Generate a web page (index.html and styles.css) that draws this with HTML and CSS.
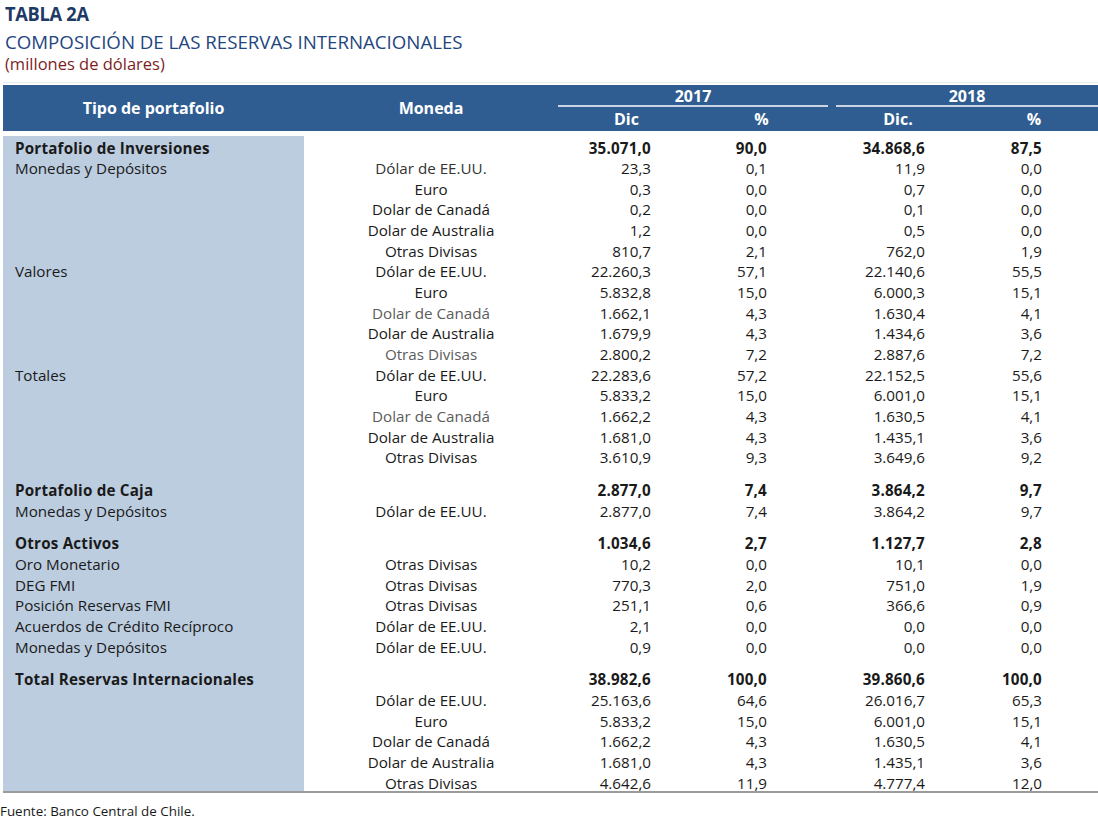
FILE: index.html
```html
<!DOCTYPE html>
<html lang="es">
<head>
<meta charset="utf-8">
<title>Tabla 2A</title>
<link rel="stylesheet" href="styles.css">
</head>
<body>
<div class="page">
  <header class="titles">
    <h1 class="t-num"><span class="t-num-in">TABLA 2A</span></h1>
    <h2 class="t-main">COMPOSICIÓN DE LAS RESERVAS INTERNACIONALES</h2>
    <p class="t-unit">(millones de dólares)</p>
  </header>
  <div class="rule-top"></div>
  <table class="data">
    <colgroup>
      <col class="c-tipo"><col class="c-mon"><col class="c-d17"><col class="c-p17"><col class="c-sp"><col class="c-d18"><col class="c-p18">
    </colgroup>
    <thead>
      <tr class="h1">
        <th rowspan="2" class="h-tipo">Tipo de portafolio</th>
        <th rowspan="2" class="h-mon">Moneda</th>
        <th colspan="2" class="h-year">2017</th>
        <th rowspan="2" class="h-sp"></th>
        <th colspan="2" class="h-year">2018</th>
      </tr>
      <tr class="h2">
        <th class="h-sub">Dic</th>
        <th class="h-sub">%</th>
        <th class="h-sub h-dic18">Dic.</th>
        <th class="h-sub">%</th>
      </tr>
    </thead>
    <tbody>
      <tr class="gap"><td class="tipo"></td><td colspan="6"></td></tr>
      <tr class="b"><td class="tipo">Portafolio de Inversiones</td><td class="mon"></td><td class="n d17">35.071,0</td><td class="n p17">90,0</td><td></td><td class="n d18">34.868,6</td><td class="n p18">87,5</td></tr>
      <tr><td class="tipo">Monedas y Depósitos</td><td class="mon soft">Dólar de EE.UU.</td><td class="n d17">23,3</td><td class="n p17">0,1</td><td></td><td class="n d18">11,9</td><td class="n p18">0,0</td></tr>
      <tr><td class="tipo"></td><td class="mon">Euro</td><td class="n d17">0,3</td><td class="n p17">0,0</td><td></td><td class="n d18">0,7</td><td class="n p18">0,0</td></tr>
      <tr><td class="tipo"></td><td class="mon">Dolar de Canadá</td><td class="n d17">0,2</td><td class="n p17">0,0</td><td></td><td class="n d18">0,1</td><td class="n p18">0,0</td></tr>
      <tr><td class="tipo"></td><td class="mon">Dolar de Australia</td><td class="n d17">1,2</td><td class="n p17">0,0</td><td></td><td class="n d18">0,5</td><td class="n p18">0,0</td></tr>
      <tr><td class="tipo"></td><td class="mon">Otras Divisas</td><td class="n d17">810,7</td><td class="n p17">2,1</td><td></td><td class="n d18">762,0</td><td class="n p18">1,9</td></tr>
      <tr><td class="tipo">Valores</td><td class="mon">Dólar de EE.UU.</td><td class="n d17">22.260,3</td><td class="n p17">57,1</td><td></td><td class="n d18">22.140,6</td><td class="n p18">55,5</td></tr>
      <tr><td class="tipo"></td><td class="mon">Euro</td><td class="n d17">5.832,8</td><td class="n p17">15,0</td><td></td><td class="n d18">6.000,3</td><td class="n p18">15,1</td></tr>
      <tr><td class="tipo"></td><td class="mon muted">Dolar de Canadá</td><td class="n d17">1.662,1</td><td class="n p17">4,3</td><td></td><td class="n d18">1.630,4</td><td class="n p18">4,1</td></tr>
      <tr><td class="tipo"></td><td class="mon">Dolar de Australia</td><td class="n d17">1.679,9</td><td class="n p17">4,3</td><td></td><td class="n d18">1.434,6</td><td class="n p18">3,6</td></tr>
      <tr><td class="tipo"></td><td class="mon muted">Otras Divisas</td><td class="n d17">2.800,2</td><td class="n p17">7,2</td><td></td><td class="n d18">2.887,6</td><td class="n p18">7,2</td></tr>
      <tr><td class="tipo">Totales</td><td class="mon">Dólar de EE.UU.</td><td class="n d17">22.283,6</td><td class="n p17">57,2</td><td></td><td class="n d18">22.152,5</td><td class="n p18">55,6</td></tr>
      <tr><td class="tipo"></td><td class="mon">Euro</td><td class="n d17">5.833,2</td><td class="n p17">15,0</td><td></td><td class="n d18">6.001,0</td><td class="n p18">15,1</td></tr>
      <tr><td class="tipo"></td><td class="mon muted">Dolar de Canadá</td><td class="n d17">1.662,2</td><td class="n p17">4,3</td><td></td><td class="n d18">1.630,5</td><td class="n p18">4,1</td></tr>
      <tr><td class="tipo"></td><td class="mon">Dolar de Australia</td><td class="n d17">1.681,0</td><td class="n p17">4,3</td><td></td><td class="n d18">1.435,1</td><td class="n p18">3,6</td></tr>
      <tr><td class="tipo"></td><td class="mon">Otras Divisas</td><td class="n d17">3.610,9</td><td class="n p17">9,3</td><td></td><td class="n d18">3.649,6</td><td class="n p18">9,2</td></tr>
      <tr class="sp"><td class="tipo"></td><td colspan="6"></td></tr>
      <tr class="b"><td class="tipo">Portafolio de Caja</td><td class="mon"></td><td class="n d17">2.877,0</td><td class="n p17">7,4</td><td></td><td class="n d18">3.864,2</td><td class="n p18">9,7</td></tr>
      <tr><td class="tipo">Monedas y Depósitos</td><td class="mon">Dólar de EE.UU.</td><td class="n d17">2.877,0</td><td class="n p17">7,4</td><td></td><td class="n d18">3.864,2</td><td class="n p18">9,7</td></tr>
      <tr class="sp"><td class="tipo"></td><td colspan="6"></td></tr>
      <tr class="b"><td class="tipo">Otros Activos</td><td class="mon"></td><td class="n d17">1.034,6</td><td class="n p17">2,7</td><td></td><td class="n d18">1.127,7</td><td class="n p18">2,8</td></tr>
      <tr><td class="tipo">Oro Monetario</td><td class="mon">Otras Divisas</td><td class="n d17">10,2</td><td class="n p17">0,0</td><td></td><td class="n d18">10,1</td><td class="n p18">0,0</td></tr>
      <tr><td class="tipo">DEG FMI</td><td class="mon">Otras Divisas</td><td class="n d17">770,3</td><td class="n p17">2,0</td><td></td><td class="n d18">751,0</td><td class="n p18">1,9</td></tr>
      <tr><td class="tipo">Posición Reservas FMI</td><td class="mon">Otras Divisas</td><td class="n d17">251,1</td><td class="n p17">0,6</td><td></td><td class="n d18">366,6</td><td class="n p18">0,9</td></tr>
      <tr><td class="tipo">Acuerdos de Crédito Recíproco</td><td class="mon">Dólar de EE.UU.</td><td class="n d17">2,1</td><td class="n p17">0,0</td><td></td><td class="n d18">0,0</td><td class="n p18">0,0</td></tr>
      <tr><td class="tipo">Monedas y Depósitos</td><td class="mon">Dólar de EE.UU.</td><td class="n d17">0,9</td><td class="n p17">0,0</td><td></td><td class="n d18">0,0</td><td class="n p18">0,0</td></tr>
      <tr class="sp"><td class="tipo"></td><td colspan="6"></td></tr>
      <tr class="b"><td class="tipo">Total Reservas Internacionales</td><td class="mon"></td><td class="n d17">38.982,6</td><td class="n p17">100,0</td><td></td><td class="n d18">39.860,6</td><td class="n p18">100,0</td></tr>
      <tr><td class="tipo"></td><td class="mon">Dólar de EE.UU.</td><td class="n d17">25.163,6</td><td class="n p17">64,6</td><td></td><td class="n d18">26.016,7</td><td class="n p18">65,3</td></tr>
      <tr><td class="tipo"></td><td class="mon">Euro</td><td class="n d17">5.833,2</td><td class="n p17">15,0</td><td></td><td class="n d18">6.001,0</td><td class="n p18">15,1</td></tr>
      <tr><td class="tipo"></td><td class="mon">Dolar de Canadá</td><td class="n d17">1.662,2</td><td class="n p17">4,3</td><td></td><td class="n d18">1.630,5</td><td class="n p18">4,1</td></tr>
      <tr><td class="tipo"></td><td class="mon">Dolar de Australia</td><td class="n d17">1.681,0</td><td class="n p17">4,3</td><td></td><td class="n d18">1.435,1</td><td class="n p18">3,6</td></tr>
      <tr class="last"><td class="tipo"></td><td class="mon">Otras Divisas</td><td class="n d17">4.642,6</td><td class="n p17">11,9</td><td></td><td class="n d18">4.777,4</td><td class="n p18">12,0</td></tr>
    </tbody>
  </table>
  <p class="source">Fuente: Banco Central de Chile.</p>
</div>
</body>
</html>
```

FILE: styles.css
```css
* { box-sizing: border-box; }
html, body { margin: 0; padding: 0; background: #ffffff; }
body {
  font-family: "Open Sans", "Noto Sans", "DejaVu Sans", sans-serif;
  color: #1a1a1a;
  width: 1098px;
}
.page { width: 1098px; }

.titles { padding-left: 5px; }
.t-num {
  margin: 0;
  font-size: 20px;
  line-height: 27px;
  font-weight: 700;
  color: #1d3a66;
}
.t-num-in {
  display: inline-block;
  transform: scaleX(0.91);
  transform-origin: left center;
  letter-spacing: -0.3px;
}
.t-main {
  margin: 0;
  font-size: 18.7px;
  line-height: 30px;
  font-weight: 400;
  color: #1f4680;
}
.t-unit {
  margin: 0;
  font-size: 16.5px;
  line-height: 14px;
  color: #7d1e1e;
}
.rule-top {
  margin: 11px 0 0 3px;
  height: 1px;
  background: #e3e7ec;
}

.data {
  margin: 2px 0 0 3px;
  width: 1095px;
  border-collapse: separate;
  border-spacing: 0;
  table-layout: fixed;
  border-bottom: 2px solid #9b9b9b;
}
.c-tipo { width: 301px; }
.c-mon { width: 254px; }
.c-d17 { width: 137px; }
.c-p17 { width: 133px; }
.c-sp { width: 8px; }
.c-d18 { width: 134px; }
.c-p18 { width: 128px; }

.data thead th {
  background: #2f5d92;
  color: #ffffff;
  font-weight: 700;
  font-size: 16px;
  padding: 0;
  text-align: center;
}
.h1 th { height: 22px; }
.data thead th.h-year {
  border-bottom: 2px solid #c9d4e2;
  padding-top: 2px;
  line-height: 18px;
  vertical-align: middle;
}
.h2 th { height: 24px; line-height: 24px; }
.h-tipo, .h-mon { vertical-align: middle; }
.h-dic18 { padding-right: 10px !important; }

.data tbody td {
  padding: 4px 0 0 0;
  font-size: 15.2px;
  line-height: 16.65px;
  height: 20.65px;
  white-space: nowrap;
  vertical-align: top;
}
.data tbody tr.gap td { height: 4.5px; line-height: 0; padding: 0; font-size: 0; }
.data tbody tr.gap td.tipo { background: transparent; }
.data tbody tr.sp td { height: 12px; line-height: 0; padding: 0; font-size: 0; }
.data tbody td.tipo {
  background: #bccde0;
  padding-left: 12px;
}
.b td { font-weight: 700; letter-spacing: 0.2px; }
.mon { text-align: center; }
.soft { color: #333333; }
.muted { color: #5c5c5c; }
.n { text-align: right; }
.d17 { padding-right: 44px !important; }
.p17 { padding-right: 61px !important; }
.d18 { padding-right: 45px !important; }
.p18 { padding-right: 56px !important; }

.source {
  margin: 10px 0 0 0;
  font-size: 13.4px;
  line-height: 16px;
  color: #1a1a1a;
}
```
